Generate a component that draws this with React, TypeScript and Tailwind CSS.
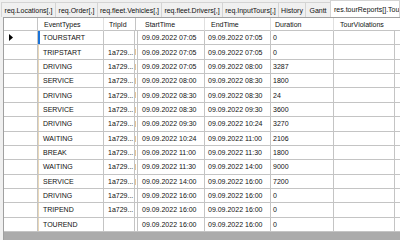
import React from "react";

type Row = { type: string; trip: string; start: string; end: string; dur: string };

const rows: Row[] = [
  { type: "TOURSTART", trip: "", start: "07:05", end: "07:05", dur: "0" },
  { type: "TRIPSTART", trip: "1a729...", start: "07:05", end: "07:05", dur: "0" },
  { type: "DRIVING", trip: "1a729...", start: "07:05", end: "08:00", dur: "3287" },
  { type: "SERVICE", trip: "1a729...", start: "08:00", end: "08:30", dur: "1800" },
  { type: "DRIVING", trip: "1a729...", start: "08:30", end: "08:30", dur: "24" },
  { type: "SERVICE", trip: "1a729...", start: "08:30", end: "09:30", dur: "3600" },
  { type: "DRIVING", trip: "1a729...", start: "09:30", end: "10:24", dur: "3270" },
  { type: "WAITING", trip: "1a729...", start: "10:24", end: "11:00", dur: "2106" },
  { type: "BREAK", trip: "1a729...", start: "11:00", end: "11:30", dur: "1800" },
  { type: "WAITING", trip: "1a729...", start: "11:30", end: "14:00", dur: "9000" },
  { type: "SERVICE", trip: "1a729...", start: "14:00", end: "16:00", dur: "7200" },
  { type: "DRIVING", trip: "1a729...", start: "16:00", end: "16:00", dur: "0" },
  { type: "TRIPEND", trip: "1a729...", start: "16:00", end: "16:00", dur: "0" },
  { type: "TOUREND", trip: "", start: "16:00", end: "16:00", dur: "0" },
];

const tabs = [
  { label: "req.Locations[,]", w: "w-[55px]" },
  { label: "req.Order[,]", w: "w-[43px]" },
  { label: "req.fleet.Vehicles[,]", w: "w-[65px]" },
  { label: "req.fleet.Drivers[,]", w: "w-[62px]" },
  { label: "req.InputTours[,]", w: "w-[57px]" },
  { label: "History", w: "w-[28px]" },
  { label: "Gantt", w: "w-[26px]" },
];

const cols = "grid grid-cols-[34px_66px_31px_3px_67px_66px_63px_61px_1fr]";
const cell = "border-r border-b border-[#c4c4c4] truncate";

export default function App() {
  return (
    <div className="w-[400px] h-[240px] overflow-hidden bg-[#f0f0f0] flex flex-col text-[7px] leading-none text-[#111]" style={{ fontFamily: '"Liberation Sans", Arial, sans-serif' }}>
      {/* tab strip */}
      <div className="h-[17px] flex items-end pl-[1px] shrink-0">
        {tabs.map((t) => (
          <div key={t.label} className={`${t.w} h-[15px] shrink-0 flex items-center justify-center border border-b-0 border-[#d4d4d4] -mr-[1px] bg-[#f0f0f0] whitespace-nowrap`}>
            {t.label}
          </div>
        ))}
        <div className="flex-1 h-[17px] bg-white border border-b-0 border-[#d4d4d4] flex items-center pl-[3px] whitespace-nowrap overflow-hidden">
          res.tourReports[].TourViolations
        </div>
      </div>

      {/* grid */}
      <div className="flex-1 ml-[3px] border-l border-t border-[#a0a0a0] bg-[#ababab] flex flex-col">
        <div className={`${cols} h-[13px] bg-white shrink-0`}>
          <div className="border-r border-b border-[#c4c4c4]" />
          <div className="border-r border-b border-[#e0e0e0] border-b-[#c4c4c4] pl-[6px] flex items-center">EventTypes</div>
          <div className="border-b border-[#c4c4c4] pl-[5px] flex items-center">TripId</div>
          <div className="border-l border-b border-[#c4c4c4]" />
          <div className="border-r border-b border-[#e0e0e0] border-b-[#c4c4c4] pl-[7px] flex items-center">StartTime</div>
          <div className="border-r border-b border-[#e0e0e0] border-b-[#c4c4c4] pl-[6px] flex items-center">EndTime</div>
          <div className="border-r border-b border-[#e0e0e0] border-b-[#c4c4c4] pl-[4px] flex items-center">Duration</div>
          <div className="border-b border-[#c4c4c4] pl-[6px] flex items-center">TourViolations</div>
          <div className="border-b border-[#c4c4c4]" />
        </div>
        {rows.map((r, i) => (
          <div key={i} className={`${cols} h-[14.36px] bg-white shrink-0`}>
            <div className={`${cell} flex items-center pl-[5px]`}>
              {i === 0 && (
                <svg width="4" height="7" viewBox="0 0 4 7">
                  <path d="M0 0 L4 3.5 L0 7 Z" fill="#000" />
                </svg>
              )}
            </div>
            <div className={`${cell} relative flex items-center pl-[5px]`}>
              <span className={`absolute left-0 top-0 bottom-0 ${i === 0 ? "w-[2px] bg-[#1a73d9]" : "w-[1px] bg-[#ead8b8]"}`} />
              {r.type}
            </div>
            <div className={`${cell} flex items-center pl-[4px]`}>{r.trip}</div>
            <div className={`${cell} relative`}>
              {i > 0 && i < 11 && <span className="absolute left-0 top-[4px] h-[6px] w-[1px] bg-[#e8c79a]" />}
            </div>
            <div className={`${cell} flex items-center pl-[4px]`}>09.09.2022 {r.start}</div>
            <div className={`${cell} flex items-center pl-[3px]`}>09.09.2022 {r.end}</div>
            <div className={`${cell} flex items-center pl-[2px]`}>{r.dur}</div>
            <div className={`${cell}`} />
            <div className="border-b border-[#c4c4c4]" />
          </div>
        ))}
      </div>
    </div>
  );
}
